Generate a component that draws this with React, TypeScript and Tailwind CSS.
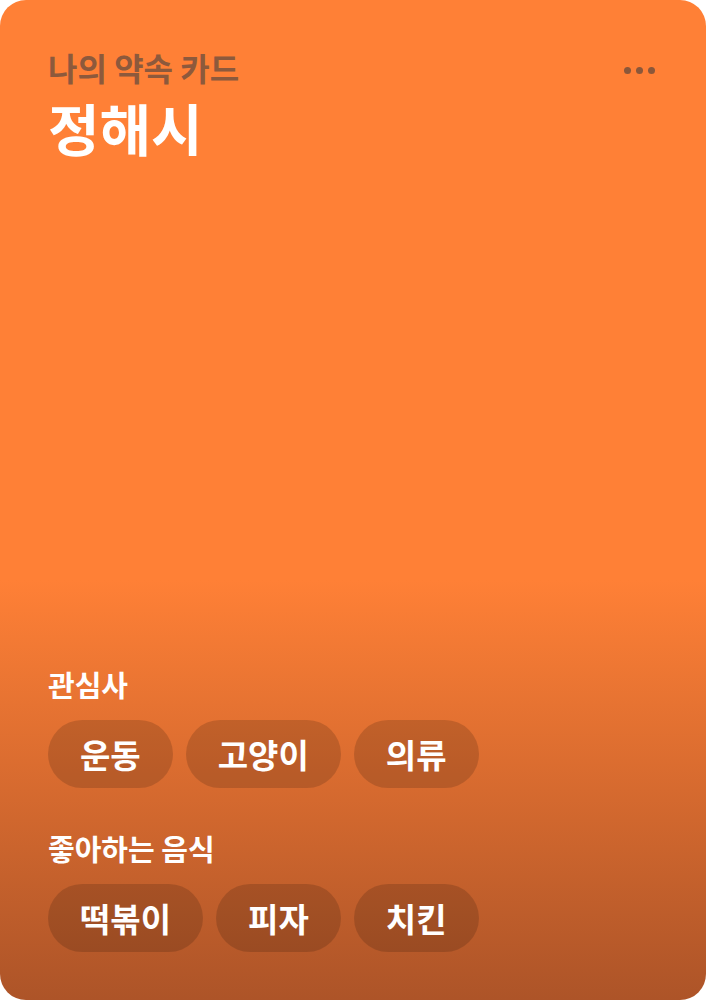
const interests = ["운동", "고양이", "의류"];
const foods = ["떡볶이", "피자", "치킨"];

function Chip({ label }: { label: string }) {
  return (
    <span className="h-[68px] px-[32px] rounded-full bg-black/15 flex items-center justify-center text-[33px] font-bold text-white leading-none">
      {label}
    </span>
  );
}

function Section({ title, items }: { title: string; items: string[] }) {
  return (
    <div className="flex flex-col">
      <h3 className="text-[29px] font-bold text-white leading-[36px]">{title}</h3>
      <div className="flex gap-[13px] mt-[18px]">
        {items.map((item) => (
          <Chip key={item} label={item} />
        ))}
      </div>
    </div>
  );
}

export default function App() {
  return (
    <div
      className="w-[706px] h-[1000px] bg-white"
      style={{ fontFamily: '"Noto Sans CJK KR", "Noto Sans", sans-serif' }}
    >
      <div className="w-full h-full rounded-[26px] overflow-hidden flex flex-col justify-between bg-[linear-gradient(180deg,#ff8036_0%,#ff8036_58%,#ad5428_100%)]">
        <div className="flex justify-between items-start px-12 pt-[47px]">
          <div className="flex flex-col">
            <p className="text-[32px] font-bold text-[#8d593c] leading-[40px]">나의 약속 카드</p>
            <h1 className="text-[56px] font-bold text-white leading-[64px] mt-[8px]">정해시</h1>
          </div>
          <button className="flex gap-[5px] items-center mt-[20px] mr-[3px] p-0">
            <span className="w-[7px] h-[7px] rounded-full bg-[#8b573a]" />
            <span className="w-[7px] h-[7px] rounded-full bg-[#8b573a]" />
            <span className="w-[7px] h-[7px] rounded-full bg-[#8b573a]" />
          </button>
        </div>
        <div className="flex flex-col gap-[42px] px-12 pb-[48px]">
          <Section title="관심사" items={interests} />
          <Section title="좋아하는 음식" items={foods} />
        </div>
      </div>
    </div>
  );
}
